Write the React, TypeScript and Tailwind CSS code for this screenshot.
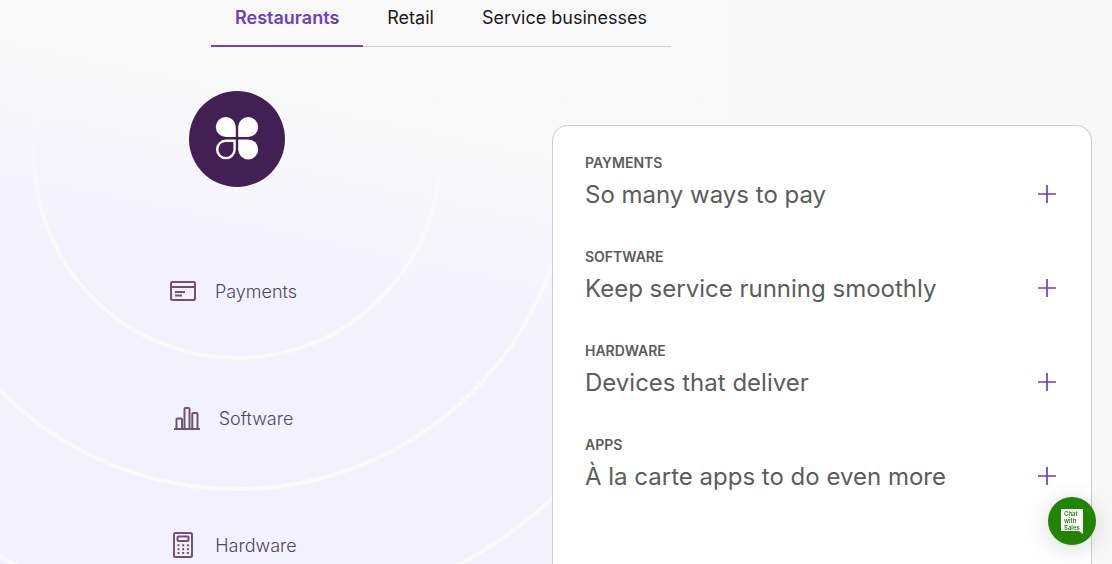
import { useState } from "react";

const TABS = ["Restaurants", "Retail", "Service businesses"];

const SECTIONS = [
  { label: "Payments", title: "So many ways to pay" },
  { label: "Software", title: "Keep service running smoothly" },
  { label: "Hardware", title: "Devices that deliver" },
  { label: "Apps", title: "À la carte apps to do even more" },
];

const CloverLogo = () => (
  <svg viewBox="0 0 96 96" className="relative size-24" role="img" aria-label="Clover">
    <circle cx="48" cy="48" r="48" fill="#432053" />
    <path d="M46.8 46V36a10 10 0 1 0-10 10Z" fill="#fff" />
    <path d="M49.2 46V36a10 10 0 1 1 10 10Z" fill="#fff" />
    <path d="M49.2 48.4v10a10 10 0 1 0 10-10Z" fill="#fff" />
    <path d="M45.6 49.7h-8.7a8.7 8.7 0 1 0 8.7 8.7Z" fill="none" stroke="#fff" strokeWidth="2.4" />
  </svg>
);

const Rings = () => (
  <svg
    viewBox="0 0 960 960"
    className="pointer-events-none absolute top-1/2 left-1/2 size-[960px] max-w-none -translate-1/2 mask-[linear-gradient(to_bottom,transparent_44%,black_60%)]"
    fill="none"
    stroke="#fafafb"
    strokeWidth="4"
    aria-hidden="true"
  >
    <circle cx="480" cy="496" r="203" />
    <circle cx="480" cy="496" r="334" />
    <circle cx="480" cy="496" r="466" />
  </svg>
);

const CardIcon = () => (
  <svg viewBox="0 0 28 28" className="size-7" fill="none" stroke="#6f5278" strokeWidth="2" aria-hidden="true">
    <rect x="2" y="4" width="24" height="18" rx="1.5" />
    <path d="M2 9h24M6 14h10M6 17.5h7" />
  </svg>
);

const ChartIcon = () => (
  <svg viewBox="0 0 28 28" className="size-7" fill="none" stroke="#6f5278" strokeWidth="2" aria-hidden="true">
    <path d="M1 24h26" />
    <path d="M3.5 24v-9.5a1 1 0 0 1 1-1h3.5a1 1 0 0 1 1 1V24" />
    <path d="M11.5 24V4a1 1 0 0 1 1-1h3a1 1 0 0 1 1 1v20" />
    <path d="M19.3 24V9a1 1 0 0 1 1-1h3.2a1 1 0 0 1 1 1v15" />
  </svg>
);

const TerminalIcon = () => (
  <svg viewBox="0 0 28 28" className="size-7" fill="none" stroke="#6f5278" strokeWidth="2" aria-hidden="true">
    <rect x="5" y="1" width="18" height="24" rx="1.5" />
    <rect x="8.5" y="4.5" width="11" height="4.5" rx="1" />
    <path d="M8.5 13.3h12M8.5 17.2h12M8.5 21.1h12" strokeDasharray="2 2.7" />
  </svg>
);

const FEATURES = [
  { name: "Payments", Icon: CardIcon },
  { name: "Software", Icon: ChartIcon },
  { name: "Hardware", Icon: TerminalIcon },
];

export default function App() {
  const [activeTab, setActiveTab] = useState("Restaurants");

  return (
    <div className="relative flex min-h-screen flex-col overflow-hidden bg-[linear-gradient(to_right,transparent_60%,#f8f8f8_96%),linear-gradient(192deg,#f9f9f9_34%,#f4f1ff_61%)] font-['Inter','Liberation_Sans',sans-serif]">
      <div role="tablist" className="relative z-10 ml-[211px] flex h-[47px] self-start border-b border-[#cfcfd2] text-lg">
        {TABS.map((tab) => (
          <button
            key={tab}
            role="tab"
            aria-selected={activeTab === tab}
            onClick={() => setActiveTab(tab)}
            className={`-mb-px px-6 pb-2.5 ${activeTab === tab ? "border-b-2 border-[#6b3fd0] font-semibold text-[#6b40c4]" : "border-b-2 border-transparent text-[#1a1a1a]"}`}
          >
            {tab}
          </button>
        ))}
      </div>

      <main className="flex flex-1 pr-5 pl-3">
        <section className="flex w-1/2 flex-col items-center pt-11 pr-[90px]">
          <div className="relative">
            <Rings />
            <CloverLogo />
          </div>
          <ul className="relative mt-[91px] flex flex-col items-center gap-[99px] pr-2">
            {FEATURES.map(({ name, Icon }) => (
              <li key={name} className="flex h-7 items-center gap-4.5 text-lg font-light text-[#4f4763]">
                <Icon />
                {name}
              </li>
            ))}
          </ul>
        </section>

        <section className="relative mt-[78px] w-1/2 rounded-t-2xl border border-b-0 border-[#cfcfd2] bg-white px-8 pt-[27px]">
          <ul className="flex flex-col gap-9">
            {SECTIONS.map(({ label, title }) => (
              <li key={label}>
                <button className="flex w-full items-end justify-between text-left text-[#5a5d5b]">
                  <span className="flex flex-col gap-1.5">
                    <span className="text-sm leading-5 font-semibold uppercase">{label}</span>
                    <span className="text-2xl leading-8">{title}</span>
                  </span>
                  <svg viewBox="0 0 24 24" className="mb-[5px] size-6" stroke="#6b3fd0" strokeWidth="1.7" aria-hidden="true">
                    <path d="M12 3v18M3 12h18" />
                  </svg>
                </button>
              </li>
            ))}
          </ul>
        </section>
      </main>

      <button className="fixed right-4 bottom-[19px] flex size-12 items-center justify-center rounded-full bg-[#228403] shadow-[0_4px_24px_rgba(0,0,0,0.15)]">
        <svg viewBox="0 0 22 25" className="h-[25px] w-[22px]" aria-hidden="true">
          <path d="M1 0h20a1 1 0 0 1 1 1v24l-4-3H1a1 1 0 0 1-1-1V1a1 1 0 0 1 1-1Z" fill="#fff" />
        </svg>
        <span className="absolute top-[13px] left-4 flex flex-col text-left text-[6px] leading-[7px] font-semibold text-[#228403]">
          <span>Chat</span>
          <span>with</span>
          <span>Sales</span>
        </span>
      </button>
    </div>
  );
}
